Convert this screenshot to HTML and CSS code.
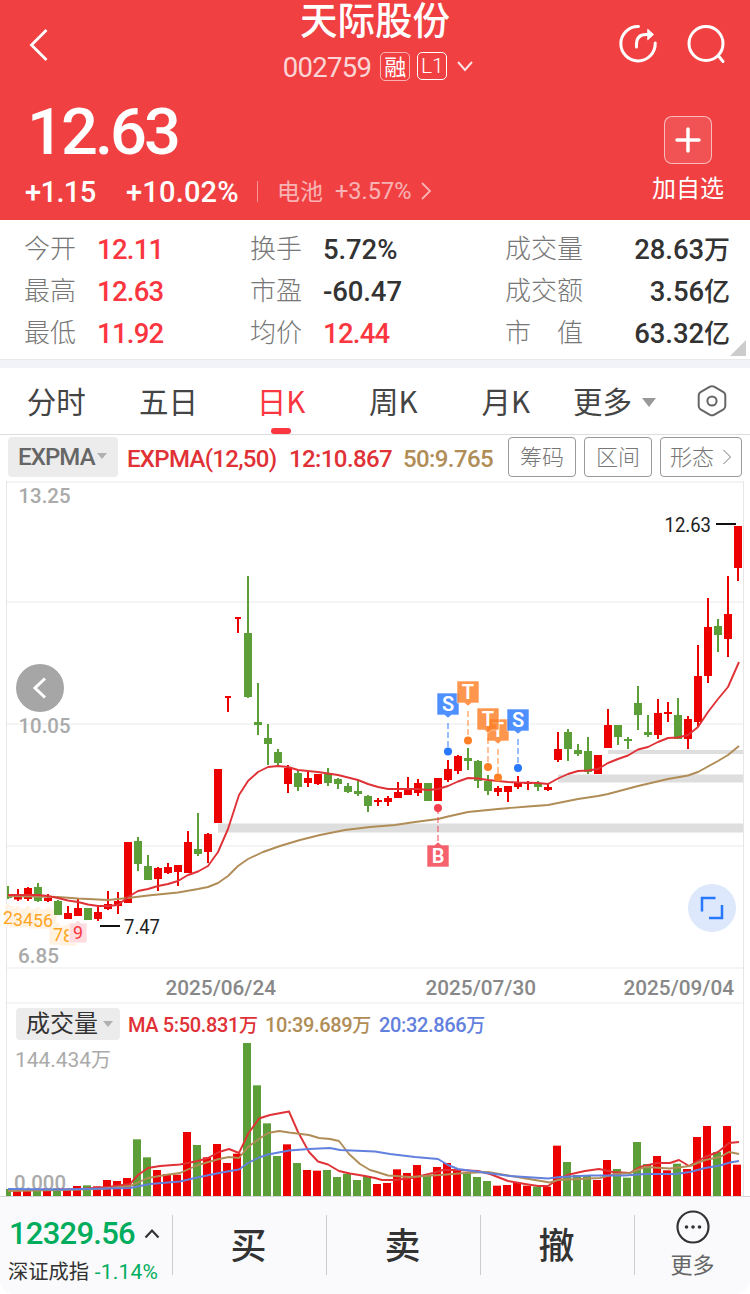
FILE: index.html
```html
<!DOCTYPE html>
<html lang="zh-CN">
<head>
  <meta charset="UTF-8">
  <title>天际股份 002759</title>
  <link rel="stylesheet" href="styles.css">
</head>
<body>

  <header class="cabecera">
    <div class="nav">
      <svg class="volver" width="20" height="34" viewBox="0 0 20 34"><path d="M17.5 2 L2.5 17 L17.5 32"/></svg>
      <div class="titulo">
        <h1>天际股份</h1>
        <div class="codigo">
          <span class="num">002759</span>
          <span class="insignia rong">融</span>
          <span class="insignia l1">L1</span>
          <svg width="16" height="11" viewBox="0 0 16 11"><path d="M1 1 L8 9 L15 1"/></svg>
        </div>
      </div>
      <div class="nav-iconos">
        <svg width="40" height="40" viewBox="0 0 40 40">
          <path d="M20.5 2.5 A17.2 17.2 0 1 0 37.2 19"/>
          <path d="M18.5 23 V20.5 C18.5 14 22 10.5 28 10.5 H33"/>
          <path class="relleno" d="M30 5.5 L35.5 10.5 L30 15.5 Z"/>
        </svg>
        <svg width="40" height="40" viewBox="0 0 40 40">
          <circle cx="20" cy="19.5" r="17"/>
          <path d="M32.5 32 L37 37.5"/>
        </svg>
      </div>
    </div>

    <div class="cotizacion">
      <div>
        <div class="precio num">12.63</div>
        <div class="variacion">
          <span class="num cambio">+1.15</span>
          <span class="num porcentaje">+10.02%</span>
          <span class="sector">电池</span>
          <span class="num sector-num">+3.57%</span>
          <svg width="12" height="20" viewBox="0 0 12 20"><path d="M2 2 L10 10 L2 18"/></svg>
        </div>
      </div>
      <div class="agregar">
        <button><svg width="26" height="26" viewBox="0 0 26 26"><path d="M13 2 V24 M2 13 H24"/></svg></button>
        <span>加自选</span>
      </div>
    </div>
  </header>

  <section class="datos">
    <dl>
      <dt>今开</dt><dd class="rojo">12.11</dd>
      <dt>最高</dt><dd class="rojo">12.63</dd>
      <dt>最低</dt><dd class="rojo">11.92</dd>
    </dl>
    <dl>
      <dt>换手</dt><dd>5.72%</dd>
      <dt>市盈</dt><dd>-60.47</dd>
      <dt>均价</dt><dd class="rojo">12.44</dd>
    </dl>
    <dl class="derecha">
      <dt>成交量</dt><dd>28.63<i>万</i></dd>
      <dt>成交额</dt><dd>3.56<i>亿</i></dd>
      <dt>市　值</dt><dd>63.32<i>亿</i></dd>
    </dl>
    <span class="esquina"></span>
  </section>

  <nav class="pestanas">
    <a>分时</a>
    <a>五日</a>
    <a class="activa">日K</a>
    <a>周K</a>
    <a>月K</a>
    <a class="mas">更多 <span class="flecha"></span></a>
    <svg width="32" height="34" viewBox="0 0 32 34">
      <path d="M14 2.7 Q16 1.6 18 2.7 L27.5 8.2 Q29.3 9.3 29.3 11.4 V22 Q29.3 24.2 27.5 25.3 L18 30.8 Q16 31.9 14 30.8 L4.5 25.3 Q2.7 24.2 2.7 22 V11.4 Q2.7 9.3 4.5 8.2 Z"/>
      <circle cx="16" cy="17" r="4.6"/>
    </svg>
  </nav>

  <div class="indicador">
    <span class="selector num">EXPMA<span class="flecha chica"></span></span>
    <span class="num v1">EXPMA(12,50)</span>
    <span class="num v2">12:10.867</span>
    <span class="num v3">50:9.765</span>
    <button>筹码</button>
    <button>区间</button>
    <button class="forma">形态 <svg width="10" height="16" viewBox="0 0 10 16"><path d="M1.5 1 L8.5 8 L1.5 15"/></svg></button>
  </div>

  <div class="grafico">
    <svg id="velas" width="750" height="523" viewBox="0 481 750 523"></svg>
    <button class="flotante anterior"><svg width="16" height="24" viewBox="0 0 16 24"><path d="M13 2.5 L3 12 L13 21.5"/></svg></button>
    <button class="flotante ampliar"><svg width="24" height="24" viewBox="0 0 24 24"><path d="M15.5 2 H2 V15.5 M22 9 V22 H9"/></svg></button>
  </div>

  <div class="volumen">
    <div class="volumen-cabecera">
      <span class="selector">成交量<span class="flecha chica"></span></span>
      <span class="num m5">MA 5:50.831<i>万</i></span>
      <span class="num m10">10:39.689<i>万</i></span>
      <span class="num m20">20:32.866<i>万</i></span>
    </div>
    <svg id="barras" width="750" height="156" viewBox="0 1040 750 156"></svg>
  </div>

  <footer class="barra">
    <div class="indice">
      <div class="indice-valor"><span class="num">12329.56</span><svg width="16" height="11" viewBox="0 0 16 11"><path d="M1.5 9.5 L8 2.5 L14.5 9.5"/></svg></div>
      <div class="indice-nombre">深证成指 <span class="num">-1.14%</span></div>
    </div>
    <a>买</a>
    <a>卖</a>
    <a>撤</a>
    <div class="menu">
      <svg width="34" height="34" viewBox="0 0 34 34">
        <circle class="aro" cx="17" cy="17" r="15.5"/>
        <circle cx="10.5" cy="17" r="1.8"/><circle cx="17" cy="17" r="1.8"/><circle cx="23.5" cy="17" r="1.8"/>
      </svg>
      <span>更多</span>
    </div>
  </footer>

  <script src="chart.js"></script>
</body>
</html>
```

FILE: styles.css
```css
* {
  box-sizing: border-box;
}

body {
  margin: 0;
  width: 750px;
  height: 1294px;
  overflow: hidden;
  background-color: #fff;
  font-family: "Noto Sans CJK SC", sans-serif;
  color: #333;
}

svg {
  display: block;
  fill: none;
  stroke: currentColor;
  flex-shrink: 0;
}

button {
  padding: 0;
  border: none;
  background: none;
  font-family: inherit;
}

i {
  font-style: normal;
  font-family: "Noto Sans CJK SC", sans-serif;
  letter-spacing: 0;
}

.num {
  font-family: Roboto, "Noto Sans CJK SC", sans-serif;
  font-weight: 500;
  letter-spacing: -0.035em;
}

/* Cabecera */
.cabecera {
  height: 220px;
  background-color: #f04042;
  color: #fff;
}

.nav {
  height: 92px;
  display: grid;
  grid-template-columns: 130px 490px 130px;
}

.volver {
  margin: 28px 0 0 29px;
  stroke-width: 2.8;
}

.titulo {
  display: flex;
  flex-direction: column;
  align-items: center;
}

.titulo h1 {
  margin: 0;
  font-size: 37.5px;
  font-weight: 500;
  line-height: 35px;
  height: 46px;
}

.codigo {
  display: flex;
  align-items: center;
  height: 40px;
  padding-left: 6px;
}

.codigo .num {
  font-size: 27.5px;
  font-weight: 400;
  letter-spacing: -0.7px;
  opacity: 0.78;
  margin-right: 9px;
  line-height: 40px;
  padding-top: 3px;
}

.insignia {
  width: 30px;
  height: 29px;
  border: 1.5px solid rgba(255, 255, 255, 0.6);
  border-radius: 5px;
  font-size: 22px;
  line-height: 24px;
  text-align: center;
  margin-right: 7px;
}

.l1 {
  font-family: Roboto, sans-serif;
  font-weight: 300;
  font-size: 21px;
  line-height: 27px;
  border-color: #fff;
  height: 28px;
  margin-right: 10px;
}

.codigo svg {
  stroke-width: 2;
  opacity: 0.85;
}

.nav-iconos {
  display: flex;
  gap: 28px;
  margin: 24px 0 0 -2px;
}

.nav-iconos svg {
  stroke-linecap: round;
  stroke-width: 3;
}

.nav-iconos .relleno {
  fill: #fff;
  stroke-width: 1;
}

.cotizacion {
  display: flex;
  justify-content: space-between;
  padding: 0 26px 0 25px;
}

.precio {
  font-size: 65px;
  line-height: 78px;
  padding: 1px 0 0 2px;
  height: 79px;
}

.precio.num {
  letter-spacing: -3px;
}

.variacion {
  display: flex;
  align-items: center;
  height: 40px;
}

.variacion .cambio,
.variacion .porcentaje {
  font-size: 29px;
  letter-spacing: -0.6px;
  width: 100px;
  padding-top: 1px;
}

.variacion .porcentaje {
  width: 133px;
  border-right: 1px solid rgba(255, 255, 255, 0.45);
  line-height: 20px;
  letter-spacing: 0.2px;
  padding-left: 1px;
}

.sector {
  font-size: 23px;
  width: 58px;
  margin-left: 19px;
  opacity: 0.6;
  line-height: 34px;
  padding-bottom: 2px;
}

.variacion .sector-num {
  font-size: 23.5px;
  font-weight: 400;
  opacity: 0.6;
  width: 85px;
  letter-spacing: 0;
}

.variacion svg {
  opacity: 0.6;
  stroke-width: 1.8;
}

.agregar {
  width: 72px;
  display: flex;
  flex-direction: column;
  align-items: center;
  padding-top: 24px;
  font-size: 24px;
}

.agregar button {
  width: 48px;
  height: 48px;
  border: 1px solid rgba(255, 255, 255, 0.6);
  border-radius: 8px;
  background-color: rgba(255, 255, 255, 0.1);
  color: #fff;
  display: flex;
  align-items: center;
  justify-content: center;
}

.agregar svg {
  stroke-width: 3.5;
  stroke-linecap: round;
}

.agregar span {
  line-height: 46px;
}

/* Datos del día */
.datos {
  position: relative;
  height: 148px;
  padding: 7px 20px 0 24px;
  display: flex;
  border-bottom: 8px solid #f2f3f8;
  box-shadow: inset 0 -1px #e9e9ec;
}

.datos dl {
  margin: 0;
  display: grid;
  grid-template-columns: 73px 153px;
  grid-auto-rows: 42px;
  width: 226px;
}

.datos .derecha {
  grid-template-columns: 100px 125px;
  margin-left: 29px;
}

.derecha dd {
  text-align: right;
}

.datos dt {
  font-size: 26px;
  line-height: 40px;
  font-weight: 300;
  color: #777;
}

.datos dd {
  margin: 0;
  font-family: Roboto, sans-serif;
  font-weight: 500;
  font-size: 27.5px;
  line-height: 45px;
  letter-spacing: -0.1px;
  white-space: nowrap;
}

.datos i {
  font-size: 26px;
  line-height: 20px;
}

.datos .rojo {
  color: #fb3640;
  letter-spacing: -0.75px;
}

.esquina {
  position: absolute;
  right: 4px;
  bottom: 4px;
  border-left: 16px solid transparent;
  border-bottom: 16px solid #ccc;
}

/* Pestañas */
.pestanas {
  height: 67px;
  display: grid;
  grid-template-columns: repeat(5, 112.4px) 124px 32px;
  border-bottom: 1px solid #ddd;
  font-size: 29.5px;
  line-height: 64px;
  color: #444;
}

.pestanas a {
  text-align: center;
}

.pestanas .activa {
  color: #fb3640;
  display: flex;
  flex-direction: column;
  align-items: center;
}

.activa::after {
  content: "";
  width: 20px;
  height: 6px;
  margin-top: -4px;
  border-radius: 3px;
  background-color: #fb3640;
}

.pestanas .mas {
  display: flex;
  align-items: center;
  height: 64px;
  padding-left: 11px;
}

.flecha {
  border: 7.5px solid transparent;
  border-top: 9px solid #999;
  border-bottom: none;
  margin: 4px 0 0 10px;
}

.flecha.chica {
  border-width: 6px 5px 0;
  border-top-color: #b0b0b0;
  margin: -2px 0 0 2px;
}

.pestanas svg {
  margin-top: 16px;
  margin-left: 10px;
  stroke-width: 2;
  color: #666;
}

/* Indicador */
.indicador {
  height: 46px;
  padding: 2px 8px 0;
  display: flex;
  white-space: nowrap;
  line-height: 45px;
  font-size: 24px;
}

.selector {
  display: flex;
  align-items: center;
  background-color: #ececec;
  border-radius: 4px;
}

.indicador .selector {
  width: 110px;
  height: 40px;
  padding-left: 10px;
  color: #666;
  line-height: 44px;
}

.indicador .num {
  letter-spacing: -0.9px;
}

.indicador .v1 {
  width: 162px;
  margin-left: 9px;
  color: #e03236;
  letter-spacing: -0.7px;
}

.indicador .v2 {
  width: 114px;
  color: #e03236;
  letter-spacing: -0.6px;
}

.indicador .v3 {
  width: 97px;
  color: #b08d57;
  letter-spacing: -0.6px;
}

.indicador button {
  width: 68px;
  height: 40px;
  margin-left: 8px;
  border: 1px solid #999;
  border-radius: 4px;
  font-size: 22px;
  font-weight: 300;
  line-height: 35px;
  padding-bottom: 3px;
  color: #777;
}

.indicador .forma {
  width: 82px;
  display: flex;
  align-items: center;
  justify-content: center;
  gap: 8px;
}

.forma svg {
  margin-top: 3px;
}

/* Gráfico */
.grafico {
  position: relative;
  height: 523px;
}

svg text {
  font-family: Roboto, "Noto Sans CJK SC", sans-serif;
  stroke: none;
}

.flotante {
  position: absolute;
  width: 48px;
  height: 48px;
  border-radius: 50%;
  display: flex;
  align-items: center;
  justify-content: center;
}

.anterior {
  left: 16px;
  top: 183px;
  background-color: #a6a6a6;
  color: #fff;
  stroke-width: 3;
}

.ampliar {
  left: 688px;
  top: 403px;
  background-color: #dde8fd;
  color: #2878ff;
  stroke-width: 2.5;
}

/* Volumen */
.volumen-cabecera {
  height: 36px;
  margin: 0 6px;
  padding: 4px 0 0 9px;
  border: solid #e6e6e6;
  border-width: 0 1px;
  display: flex;
  font-size: 20px;
  line-height: 34px;
  white-space: nowrap;
}

.volumen .selector {
  width: 104px;
  height: 32px;
  padding: 0 0 4px 10px;
  font-size: 24px;
  line-height: 28px;
}

.volumen .flecha {
  margin: 4px 0 0 5px;
}

.volumen .num {
  letter-spacing: -0.35px;
}

.volumen i {
  font-size: 19px;
  line-height: 20px;
}

.m5 {
  width: 137px;
  margin-left: 8px;
  color: #e03236;
}

.m10 {
  width: 114px;
  color: #b08d57;
}

.m20 {
  color: #6280de;
}

/* Barra inferior */
.barra {
  height: 98px;
  display: flex;
  border-top: 1px solid #d6d6da;
  border-radius: 0 0 14px 14px;
  background-color: #fafafc;
}

.indice {
  width: 172px;
  padding: 16px 0 0 8px;
  white-space: nowrap;
}

.indice .num {
  color: #00ad5c;
}

.indice-valor {
  display: flex;
  align-items: center;
  gap: 9px;
  height: 41px;
  padding-left: 1px;
}

.indice-valor .num {
  font-size: 31px;
  letter-spacing: -0.75px;
}

.indice-valor svg {
  stroke-width: 2.2;
}

.indice-nombre {
  font-size: 20.3px;
  line-height: 32px;
}

.indice-nombre .num {
  font-size: 21px;
  font-weight: 400;
  letter-spacing: 0.2px;
  margin-left: 1px;
}

.barra a {
  width: 154px;
  height: 60px;
  margin-top: 18px;
  border-left: 1px solid #ccc;
  padding-right: 2px;
  text-align: center;
  font-size: 36px;
  font-weight: 500;
  line-height: 57px;
}

.menu {
  width: 116px;
  height: 60px;
  margin-top: 18px;
  border-left: 1px solid #ccc;
  display: flex;
  flex-direction: column;
  align-items: center;
  font-size: 22px;
  color: #666;
}

.menu svg {
  fill: #333;
  stroke: none;
  margin-top: -5px;
}

.menu .aro {
  fill: none;
  stroke: #333;
  stroke-width: 2.2;
}

.menu span {
  line-height: 39px;
}
```

FILE: chart.js
```js
const ROJO = '#ed0000';
const VERDE = '#5c9e38';

// [color, apertura/cierre superior, inferior, máximo, mínimo]
const velas = [
  ['g', 894, 898, 886, 899], ['r', 897, 899.5, 889, 901], ['r', 888, 899, 887, 901], ['g', 887, 901, 883, 902],
  ['r', 898, 901, 894, 902], ['g', 901, 915, 900, 915], ['r', 913, 919, 906, 919], ['r', 908, 916, 898, 916],
  ['g', 908, 920, 908, 920], ['r', 912, 919, 907, 921], ['r', 904, 909, 891, 910], ['r', 901, 906, 892, 914],
  ['r', 842, 903, 842, 903], ['g', 841, 864, 837, 871], ['g', 866, 880, 855, 880], ['r', 868, 879, 867, 891],
  ['r', 867, 873, 863, 874], ['r', 865, 872, 865, 886], ['r', 842, 873, 831, 873], ['g', 849, 854, 813, 856],
  ['r', 834, 852, 833, 863], ['r', 769, 823, 769, 823], ['t', 696, 698, 696, 712], ['t', 617, 619, 617, 633],
  ['g', 633, 697, 576, 698], ['g', 722, 725, 683, 735], ['g', 738, 744, 724, 765], ['g', 752, 763, 749, 766],
  ['r', 768, 784, 765, 793], ['g', 773, 787, 771, 791], ['r', 778, 783, 772, 787], ['r', 774, 784, 774, 785],
  ['g', 774, 783, 768, 786], ['g', 779, 784, 778, 789], ['g', 786, 792, 783, 793], ['g', 791, 794, 780, 796],
  ['g', 796, 806, 795, 812], ['r', 800, 802, 798, 806], ['r', 798, 802, 796, 806], ['r', 792, 798, 782, 798],
  ['r', 788, 795, 777, 795], ['r', 783, 793, 779, 796], ['g', 783, 801, 783, 801], ['r', 778, 801, 778, 801],
  ['r', 769, 780, 760, 782], ['r', 756, 771, 755, 774], ['g', 758, 761, 748, 770], ['g', 761, 781, 760, 788],
  ['g', 781, 791, 775, 795], ['r', 788, 792, 786, 796], ['r', 786, 792, 786, 802], ['r', 783, 787, 776, 789],
  ['r', 782, 784, 781, 790], ['g', 783, 787, 781, 791], ['r', 787, 790, 784, 791], ['r', 749, 760, 732, 762],
  ['g', 732, 749, 729, 761], ['g', 750, 754, 744, 756], ['g', 751, 772, 737, 774], ['r', 755, 774, 755, 774],
  ['r', 725, 748, 709, 748], ['g', 725, 737, 725, 745], ['g', 739, 741, 737, 749], ['g', 703, 715, 686, 730],
  ['g', 732, 735, 715, 737], ['r', 713, 735, 699, 739], ['r', 712, 714, 702, 722], ['g', 715, 739, 698, 739],
  ['r', 719, 739, 716, 749], ['r', 676, 722, 645, 726], ['r', 627, 676, 598, 683], ['g', 626, 635, 619, 652],
  ['r', 614, 639, 576, 657], ['r', 526, 568, 526, 581]
];

const expma12 = '8,895 38,895 48,896 58,898 68,900.5 78,902 88,904.5 98,906 108,906 118,905 128,897 138,891 148,889 158,886 168,884 178,881 188,875 198,871.5 208,866 218,852 228,829 239,795 248,781 258,772 268,767 278,766 288,767 298,770 308,771 318,772 328,773.5 338,775 348,777.5 358,780 368,784 378,787 388,789 418,789 428,790 438,789 448,786 458,781.5 468,778 478,778.5 488,780 498,781 508,782 518,782.5 538,783 548,784 558,778.5 568,774 578,771 588,770.5 598,769 608,763 618,759 628,755.5 638,749.5 648,747 658,742 668,738 678,737.5 688,735 698,727 708,712 718,699 728,687 739,662';
const expma50 = '8,896 58,897 78,898.5 108,900 128,898 148,895.5 178,892.5 198,889 208,887 218,883 228,876 238,866 248,859 263,852 280,846 300,840 320,835 345,830 370,827 395,825 415,822 438,819 448,816.5 468,812 498,809 528,806.5 548,805 568,801 578,799 598,796 608,794 638,786 668,779 688,775.5 698,772 718,761 728,755 739,746';

const volumen = 'g567 r570 r570 g568 r565 g565 r570 r558 g556 r559 r540 r543 r534 g418 g472 r510 r522 r524 r396 g435 r472 r432 r489 r461 g129 g256 g370 g468 r433 g489 r510 r512 g510 g531 g521 g540 g528 r552 r549 r508 r519 r495 g525 r501 r489 r508 g518 g531 g543 r557 r555 r548 r557 g560 r560 r437 g486 g525 g526 r540 r480 g507 g533 g426 g492 r468 r511 g491 r507 r411 r378 g456 r378 r494'.split(' ');

const ma5 = '8,1190 50,1190 80,1189 108,1187 130,1184 138,1175 148,1168 160,1166 180,1164.5 198,1161 208,1158 219,1152 229,1149 239,1153 248,1134 259,1118.5 270,1115 289,1111.5 298,1132 309,1152 318,1161.5 328,1164.5 339,1171 350,1173.5 365,1176 375,1178 382,1180 395,1180 412,1178 433,1173 443,1170 458,1170 478,1171 490,1174 508,1181 525,1184 538,1186 548,1186 557,1180 567,1175 585,1171 599,1169 613,1172 630,1173 640,1167 657,1163 670,1163 679,1160 689,1166 705,1157 718,1152 729,1143 739,1142';
const ma10 = '8,1191 60,1190 100,1189 130,1186 148,1178 165,1175 180,1173 198,1165 219,1159 229,1157 239,1158 248,1147 259,1139 268,1133 279,1131 289,1132.5 309,1135 319,1138 330,1139 339,1141 349,1154 360,1164 370,1170 377,1172 388,1175.5 410,1177 440,1175 465,1173 488,1172 505,1175 535,1180 550,1182.5 558,1180 600,1178 615,1174 630,1173 645,1167 670,1168.5 690,1166 705,1160 720,1157 729,1152 739,1154';
const ma20 = '8,1189 60,1189.5 130,1188 150,1184 180,1181.5 195,1178 219,1173 239,1169.5 248,1163 259,1157.5 268,1154.5 289,1150.5 309,1149 330,1148 340,1150 375,1151.5 390,1154 415,1157 438,1159 448,1165 458,1169 480,1172 510,1176 548,1178.5 560,1177 590,1175.5 625,1175.5 645,1174 675,1174 690,1172 705,1168 720,1165.5 730,1162.5 739,1161';

function rect(x, y, w, h, color) {
  return `<rect x="${x}" y="${y}" width="${w}" height="${h}" fill="${color}" stroke="none"/>`;
}

function linea(puntos, color) {
  return `<polyline points="${puntos}" stroke="${color}" stroke-width="1.9" stroke-linejoin="round"/>`;
}

function texto(x, y, t, ancho, color, tam, peso = 400) {
  return `<text x="${x}" y="${y}" textLength="${ancho}" lengthAdjust="spacingAndGlyphs" fill="${color}" font-size="${tam}" font-weight="${peso}">${t}</text>`;
}

// Marca de compra/venta: caja con punta, línea punteada y punto
function marca(x, y, letra, color, yPunto) {
  const abajo = yPunto > y;
  const punta = abajo
    ? `M${x - 11} ${y} h22 v22 h-7.5 l-3.5 3 l-3.5 -3 h-7.5 Z`
    : `M${x - 11} ${y} h7.5 l3.5 -3 l3.5 3 h7.5 v22 h-22 Z`;
  const inicio = abajo ? y + 30 : y - 4;
  return `<path d="M${x} ${inicio} V${yPunto}" stroke="${color}" stroke-width="1.6" stroke-dasharray="6 3" opacity="0.6"/>
    <circle cx="${x}" cy="${yPunto}" r="4" fill="${color}" stroke="none"/>
    <path d="${punta}" fill="${color}" opacity="0.82" stroke="#fff" stroke-width="0.6"/>
    <text x="${x}" y="${y + 18}" text-anchor="middle" fill="#fff" font-size="20" font-weight="600">${letra}</text>`;
}

function dibujarVelas() {
  let s = '';
  [482, 602, 724, 846, 968, 1003].forEach(y => s += rect(7, y - 1, 736, 2, '#f4f4f4'));
  s += rect(6, 481, 1, 523, '#e6e6e6') + rect(743, 481, 1, 523, '#e6e6e6');

  // zonas de hueco
  s += rect(218, 823.5, 525, 9, '#dedede') + rect(558, 774.5, 185, 8, '#dedede') + rect(608, 750, 135, 4, '#dedede');

  // secuencia 1-9, el 9 va encima de todo
  const pasos = [[8, 906, 2], [18, 908, 3], [28, 908, 4], [38, 909, 5], [48, 909, 6], [58, 925, 7], [68, 926, 8], [78, 923, 9]];
  let cajas = '';
  let digitos = '';
  pasos.forEach(([x, y, n]) => {
    const rojo = n === 9;
    const x0 = Math.max(x - 9, 5);
    const caja = `<path d="M${x0} ${y} H${x - 3} L${x} ${y - 3} L${x + 3} ${y} H${x + 9} V${y + 20} H${x0} Z" fill="${rojo ? '#ffdcdf' : '#fff2e1'}" stroke="#fff" stroke-width="0.8"/>`;
    const digito = texto(x - 5, y + (n < 7 ? 18 : 16), n, 10, rojo ? '#fb3640' : '#ffa51f', 19);
    if (rojo) {
      digitos += caja + digito;
    } else {
      cajas += caja;
      digitos += digito;
    }
  });
  s += cajas + digitos;

  velas.forEach(([c, a, b, hi, lo], i) => {
    const x = 8 + i * 10;
    const color = c === 'g' ? VERDE : ROJO;
    const medio = c === 't' ? 3 : 4;
    const izq = Math.max(x - medio, 7);
    s += rect(izq, a, x + medio - izq, b - a, color);
    s += rect(x - 1, hi, 2, lo - hi, color);
  });

  s += linea(expma50, '#b08d57') + linea(expma12, '#e03236');

  s += marca(448, 693, 'S', '#2878ff', 751.5);
  s += marca(468, 681, 'T', '#ff7f27', 740.5);
  s += marca(498, 719, 'T', '#ff7f27', 777.5);
  s += marca(488, 708, 'T', '#ff7f27', 767);
  s += marca(518, 709, 'S', '#2878ff', 768);
  s += marca(438, 845, 'B', '#f33f4e', 808);

  s += rect(716, 523, 20, 2, '#111') + texto(664.5, 532, '12.63', 46.5, '#222', 20);
  s += rect(100, 925, 20, 2, '#111') + texto(124, 934, '7.47', 36, '#222', 20);
  s += texto(18.5, 503, '13.25', 52, '#aaa', 21, 500) + texto(18.5, 733, '10.05', 52, '#aaa', 21, 500) + texto(18, 963, '6.85', 41, '#aaa', 21, 500);
  s += texto(165.5, 995, '2025/06/24', 110.5, '#888', 21, 500) + texto(425.5, 995, '2025/07/30', 110.5, '#888', 21, 500) + texto(623.5, 995, '2025/09/04', 110.5, '#888', 21, 500);
  document.getElementById('velas').innerHTML = s;
}

function dibujarVolumen() {
  let s = rect(6, 1040, 1, 156, '#e6e6e6') + rect(743, 1040, 1, 156, '#e6e6e6');
  volumen.forEach((v, i) => {
    const y = 1000 + v.slice(1) / 3;
    const x = Math.max(3 + i * 10, 6);
    s += rect(x, y, 11 + i * 10 - x, 1196 - y, v[0] === 'g' ? VERDE : ROJO);
  });
  s += texto(15, 1067, '144.434<tspan font-size="20">万</tspan>', 96, '#aaa', 21);
  s += texto(14, 1190, '0.000', 52, '#aaa', 21, 500);
  s += linea(ma5, '#e03236') + linea(ma10, '#b08d57') + linea(ma20, '#6280de');
  document.getElementById('barras').innerHTML = s;
}

dibujarVelas();
dibujarVolumen();
```
